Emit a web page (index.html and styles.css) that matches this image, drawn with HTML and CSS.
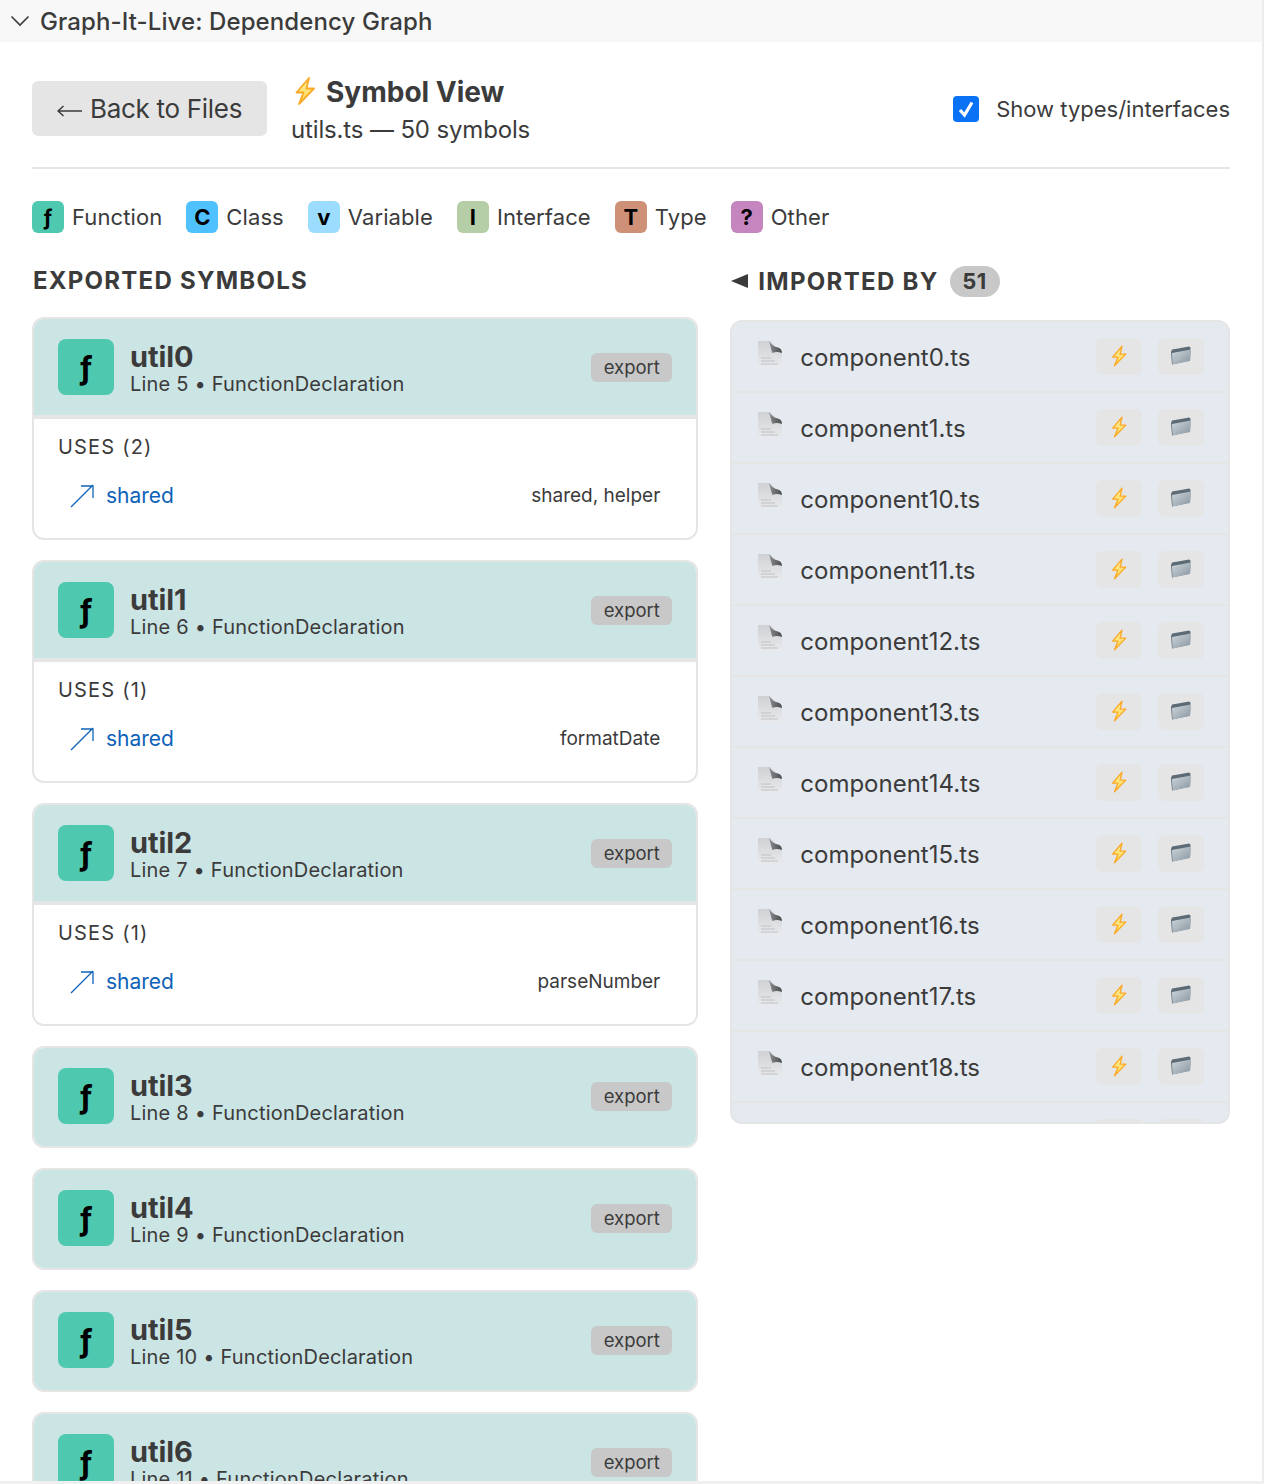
FILE: index.html
```html
<!DOCTYPE html>
<html lang="en">
<head>
<meta charset="utf-8">
<title>Graph-It-Live: Dependency Graph</title>
<link rel="stylesheet" href="styles.css">
</head>
<body>
<svg class="defs" width="0" height="0" aria-hidden="true">
  <defs>
    <linearGradient id="bolt" x1="0" y1="0" x2="0" y2="1"><stop offset="0" stop-color="#fff0a0"/><stop offset="1" stop-color="#ffd84f"/></linearGradient>
    <linearGradient id="fold" x1="0" y1="0" x2="1" y2="1"><stop offset="0" stop-color="#cfd6da"/><stop offset="1" stop-color="#8795a1"/></linearGradient>
    <linearGradient id="doc" x1="0" y1="0" x2="0" y2="1"><stop offset="0" stop-color="#cfd1d4"/><stop offset="1" stop-color="#e8eaec"/></linearGradient>
    <linearGradient id="curl" x1="0" y1="0" x2="1" y2="0"><stop offset="0" stop-color="#8a8c8f"/><stop offset="1" stop-color="#4a4c4e"/></linearGradient>
    <symbol id="i-bolt" viewBox="0 0 24 28"><path d="M16 1 3.500 15.500h7L6 27l15-15.500h-7.500z" fill="url(#bolt)" stroke="#fba928" stroke-width="1.800" stroke-linejoin="round"/></symbol>
    <symbol id="i-folder" viewBox="0 0 22 20"><path d="M1 6 2 3.500l6-1L19 .500l1.500 1-.5 13L2 18.500z" fill="#5d6b77"/><path d="M2 7l19-3.500-1 11.500L2.500 18.500z" fill="url(#fold)"/></symbol>
    <symbol id="i-file" viewBox="0 0 26 28"><path d="M1 1h12l12 12v14H1z" fill="url(#doc)"/><path d="M4 21h14M4 24h17M4 18h10" stroke="#bfc2c5" stroke-width="1"/><path d="M12 1c1.500 4 2 9 3.500 12 3-1.500 6-1 9.500 0 0-3-1.500-5-4-5.500C17 7 14 4 12 1z" fill="url(#curl)"/></symbol>
    <symbol id="i-arrow" viewBox="0 0 24 24"><path d="M1 23 23 1M11 2h12v12" fill="none" stroke="#0e62b8" stroke-width="1.300"/></symbol>
  </defs>
</svg>

<header class="titlebar">
  <svg class="chevron" viewBox="0 0 20 12" width="20" height="12"><path d="M1.500 1.500 10 10l8.500-8.500" fill="none" stroke="#3b3b3b" stroke-width="1.600"/></svg>
  <span>Graph-It-Live: Dependency Graph</span>
</header>

<main class="page">
  <section class="toolbar">
    <button class="back"><svg class="back-arrow" viewBox="0 0 25 12" width="25" height="12"><path d="M25 6H1M6.500 1 1 6l5.500 5" fill="none" stroke="#3b3b3b" stroke-width="1.500"/></svg>Back to Files</button>
    <div class="title-block">
      <h1><svg class="title-bolt"><use href="#i-bolt"/></svg>Symbol View</h1>
      <p>utils.ts — 50 symbols</p>
    </div>
    <label class="toggle">
      <span class="check"><svg viewBox="0 0 22 26" width="22" height="26"><path d="M5 14l4.500 5L17 6.500" fill="none" stroke="#fff" stroke-width="3.200"/></svg></span>
      <span>Show types/interfaces</span>
    </label>
  </section>

  <section class="legend">
    <div class="legend-item"><span class="swatch fn">ƒ</span>Function</div>
    <div class="legend-item"><span class="swatch cl">C</span>Class</div>
    <div class="legend-item"><span class="swatch va">v</span>Variable</div>
    <div class="legend-item"><span class="swatch in">I</span>Interface</div>
    <div class="legend-item"><span class="swatch ty">T</span>Type</div>
    <div class="legend-item"><span class="swatch ot">?</span>Other</div>
  </section>

  <section class="columns">
    <div class="col-left">
      <h2 class="heading-left">EXPORTED SYMBOLS</h2>

      <article class="card">
        <div class="card-head">
          <span class="badge">ƒ</span>
          <div class="sym"><div class="sym-name">util0</div><div class="sym-meta">Line 5 • FunctionDeclaration</div></div>
          <span class="tag">export</span>
        </div>
        <div class="card-body">
          <div class="uses">USES (2)</div>
          <div class="use-row"><svg class="use-arrow"><use href="#i-arrow"/></svg><a class="use-link">shared</a><span class="use-names">shared, helper</span></div>
        </div>
      </article>

      <article class="card">
        <div class="card-head">
          <span class="badge">ƒ</span>
          <div class="sym"><div class="sym-name">util1</div><div class="sym-meta">Line 6 • FunctionDeclaration</div></div>
          <span class="tag">export</span>
        </div>
        <div class="card-body">
          <div class="uses">USES (1)</div>
          <div class="use-row"><svg class="use-arrow"><use href="#i-arrow"/></svg><a class="use-link">shared</a><span class="use-names">formatDate</span></div>
        </div>
      </article>

      <article class="card">
        <div class="card-head">
          <span class="badge">ƒ</span>
          <div class="sym"><div class="sym-name">util2</div><div class="sym-meta">Line 7 • FunctionDeclaration</div></div>
          <span class="tag">export</span>
        </div>
        <div class="card-body">
          <div class="uses">USES (1)</div>
          <div class="use-row"><svg class="use-arrow"><use href="#i-arrow"/></svg><a class="use-link">shared</a><span class="use-names">parseNumber</span></div>
        </div>
      </article>

      <article class="card closed">
        <div class="card-head">
          <span class="badge">ƒ</span>
          <div class="sym"><div class="sym-name">util3</div><div class="sym-meta">Line 8 • FunctionDeclaration</div></div>
          <span class="tag">export</span>
        </div>
      </article>

      <article class="card closed">
        <div class="card-head">
          <span class="badge">ƒ</span>
          <div class="sym"><div class="sym-name">util4</div><div class="sym-meta">Line 9 • FunctionDeclaration</div></div>
          <span class="tag">export</span>
        </div>
      </article>

      <article class="card closed">
        <div class="card-head">
          <span class="badge">ƒ</span>
          <div class="sym"><div class="sym-name">util5</div><div class="sym-meta">Line 10 • FunctionDeclaration</div></div>
          <span class="tag">export</span>
        </div>
      </article>

      <article class="card closed">
        <div class="card-head">
          <span class="badge">ƒ</span>
          <div class="sym"><div class="sym-name">util6</div><div class="sym-meta">Line 11 • FunctionDeclaration</div></div>
          <span class="tag">export</span>
        </div>
      </article>
    </div>

    <div class="col-right">
      <h2 class="heading-right"><span class="tri"></span>IMPORTED BY<span class="count">51</span></h2>
      <div class="imports">
        <div class="imp-row"><svg class="file"><use href="#i-file"/></svg><span class="imp-name">component0.ts</span><span class="act"><svg class="a-bolt"><use href="#i-bolt"/></svg></span><span class="act"><svg class="a-folder"><use href="#i-folder"/></svg></span></div>
        <div class="imp-row"><svg class="file"><use href="#i-file"/></svg><span class="imp-name">component1.ts</span><span class="act"><svg class="a-bolt"><use href="#i-bolt"/></svg></span><span class="act"><svg class="a-folder"><use href="#i-folder"/></svg></span></div>
        <div class="imp-row"><svg class="file"><use href="#i-file"/></svg><span class="imp-name">component10.ts</span><span class="act"><svg class="a-bolt"><use href="#i-bolt"/></svg></span><span class="act"><svg class="a-folder"><use href="#i-folder"/></svg></span></div>
        <div class="imp-row"><svg class="file"><use href="#i-file"/></svg><span class="imp-name">component11.ts</span><span class="act"><svg class="a-bolt"><use href="#i-bolt"/></svg></span><span class="act"><svg class="a-folder"><use href="#i-folder"/></svg></span></div>
        <div class="imp-row"><svg class="file"><use href="#i-file"/></svg><span class="imp-name">component12.ts</span><span class="act"><svg class="a-bolt"><use href="#i-bolt"/></svg></span><span class="act"><svg class="a-folder"><use href="#i-folder"/></svg></span></div>
        <div class="imp-row"><svg class="file"><use href="#i-file"/></svg><span class="imp-name">component13.ts</span><span class="act"><svg class="a-bolt"><use href="#i-bolt"/></svg></span><span class="act"><svg class="a-folder"><use href="#i-folder"/></svg></span></div>
        <div class="imp-row"><svg class="file"><use href="#i-file"/></svg><span class="imp-name">component14.ts</span><span class="act"><svg class="a-bolt"><use href="#i-bolt"/></svg></span><span class="act"><svg class="a-folder"><use href="#i-folder"/></svg></span></div>
        <div class="imp-row"><svg class="file"><use href="#i-file"/></svg><span class="imp-name">component15.ts</span><span class="act"><svg class="a-bolt"><use href="#i-bolt"/></svg></span><span class="act"><svg class="a-folder"><use href="#i-folder"/></svg></span></div>
        <div class="imp-row"><svg class="file"><use href="#i-file"/></svg><span class="imp-name">component16.ts</span><span class="act"><svg class="a-bolt"><use href="#i-bolt"/></svg></span><span class="act"><svg class="a-folder"><use href="#i-folder"/></svg></span></div>
        <div class="imp-row"><svg class="file"><use href="#i-file"/></svg><span class="imp-name">component17.ts</span><span class="act"><svg class="a-bolt"><use href="#i-bolt"/></svg></span><span class="act"><svg class="a-folder"><use href="#i-folder"/></svg></span></div>
        <div class="imp-row"><svg class="file"><use href="#i-file"/></svg><span class="imp-name">component18.ts</span><span class="act"><svg class="a-bolt"><use href="#i-bolt"/></svg></span><span class="act"><svg class="a-folder"><use href="#i-folder"/></svg></span></div>
        <div class="imp-row"><span class="file"></span><span class="imp-name"></span><span class="act"></span><span class="act"></span></div>
      </div>
    </div>
  </section>
</main>
<div class="edge-right"></div>
<div class="edge-bottom"></div>
</body>
</html>
```

FILE: styles.css
```css
* { box-sizing: border-box; }
html, body { margin: 0; height: 1484px; overflow: hidden; background: #fff; }
body { position: relative; font-family: Inter, "Liberation Sans", sans-serif; color: #3b3b3b; }
.defs { position: absolute; }

.titlebar { height: 42px; background: #f8f8f8; display: flex; align-items: center; padding-left: 10px; gap: 10px; font-size: 24px; font-weight: 500; letter-spacing: .1px; }
.chevron { flex: none; }

.page { padding: 39px 34px 0 32px; }

.toolbar { display: flex; align-items: center; height: 88px; padding-bottom: 31px; border-bottom: 2px solid #e5e5e5; margin-bottom: 32px; }
.back { width: 235px; height: 55px; border: 0; border-radius: 6px; background: #e5e5e5; color: #3b3b3b; font: 400 26px Inter, "Liberation Sans", sans-serif; letter-spacing: -.3px; padding: 0 0 0 25px; display: flex; align-items: center; gap: 8px; }
.back-arrow { flex: none; margin-top: 4px; }
.title-block { margin-left: 24px; margin-top: 3px; }
.title-block h1 { margin: 0; display: flex; align-items: center; font-size: 28px; font-weight: 700; line-height: 34px; }
.title-bolt { width: 28px; height: 28px; margin-right: 7px; margin-top: -2px; }
.title-block p { margin: 6px 0 0; font-size: 24px; line-height: 30px; letter-spacing: -.15px; }
.toggle { margin-left: auto; display: flex; align-items: center; gap: 17px; font-size: 22px; }
.check { width: 26px; height: 26px; border-radius: 4px; background: #0a72f5; display: flex; align-items: center; justify-content: center; }

.legend { display: flex; gap: 24px; height: 32px; margin-bottom: 30px; }
.legend-item { display: flex; align-items: center; gap: 8px; font-size: 22px; letter-spacing: .1px; }
.swatch { width: 32px; height: 32px; border-radius: 6px; display: flex; align-items: center; justify-content: center; color: #000; font-size: 22px; font-weight: 700; }
.fn { background: #4ec9b0; }
.cl { background: #4fc1ff; }
.va { background: #9cdcfe; }
.in { background: #b5cea8; }
.ty { background: #ce9178; }
.ot { background: #c586c0; }

.columns { display: flex; gap: 32px; align-items: flex-start; }
.col-left { flex: 4 1 0; }
.col-right { flex: 3 1 0; }

.heading-left { margin: 0 0 19px; height: 35px; display: flex; align-items: center; font-size: 24px; font-weight: 700; letter-spacing: 1.250px; padding: 3px 0 4px 1px; }
.heading-right { margin: 0 0 21px; height: 36px; display: flex; align-items: center; font-size: 24px; font-weight: 700; letter-spacing: 1.300px; padding-left: 1px; }
.tri { width: 0; height: 0; border: 7.500px solid transparent; border-left: 0; border-right: 17px solid #3b3b3b; margin-right: 10px; }
.count { margin-left: 11px; min-width: 50px; height: 31px; border-radius: 16px; background: #c8c8c8; display: flex; align-items: center; justify-content: center; font-size: 22px; letter-spacing: .5px; }

.card { border: 2px solid #e5e5e5; border-radius: 12px; margin-bottom: 20px; overflow: hidden; background: #fff; height: 223px; }
.card.closed { height: 102px; }
.card-head { height: 98px; background: #cbe4e4; display: flex; align-items: center; padding: 0 24px 2px; }
.card:not(.closed) .card-head { height: 100px; padding-bottom: 0; border-bottom: 4px solid #e5e5e5; }
.badge { width: 56px; height: 56px; border-radius: 8px; background: #4ec9b0; color: #000; display: flex; align-items: center; justify-content: center; font-size: 32px; font-weight: 700; flex: none; }
.sym { margin-left: 16px; flex: 1; min-width: 0; padding-top: 2px; }
.sym-name { font-size: 29px; font-weight: 700; line-height: 33px; letter-spacing: -.1px; }
.sym-meta { font-size: 20px; line-height: 23px; letter-spacing: .2px; }
.tag { width: 81px; height: 29px; border-radius: 6px; background: #c8c8c8; display: flex; align-items: center; justify-content: center; font-size: 18.500px; }

.card-body { padding: 15px 36px 0 24px; }
.uses { font-size: 20px; line-height: 26px; letter-spacing: 1.200px; }
.use-row { display: flex; align-items: center; margin-top: 21px; height: 29px; padding-left: 12px; }
.use-arrow { width: 24px; height: 24px; flex: none; }
.use-link { margin-left: 12px; color: #0e62b8; font-size: 21px; }
.use-names { margin-left: auto; font-size: 19px; }

.imports { height: 804px; border: 2px solid #e5e5e5; border-radius: 12px; background: #e5e9f0; overflow: hidden; }
.imp-row { height: 71px; border-bottom: 2px solid #e5e5e5; display: flex; align-items: center; padding: 0 24px; flex: none; }
.file { width: 26px; height: 28px; flex: none; margin-top: -5px; margin-right: 16px; margin-left: 1px; }
.imp-name { flex: 1; font-size: 24px; padding: 2px 0 0 1px; }
.act { width: 46px; height: 37px; margin-left: 16px; margin-top: -1px; border-radius: 6px; background: #e5e5e5; display: flex; align-items: center; justify-content: center; flex: none; }
.a-bolt { width: 18px; height: 22px; }
.a-folder { width: 22px; height: 20px; }

.edge-right { position: absolute; top: 0; right: 0; width: 2px; height: 100%; background: #ececec; }
.edge-bottom { position: absolute; left: 0; right: 0; bottom: 0; height: 3px; background: #f0f0f0; }
```
